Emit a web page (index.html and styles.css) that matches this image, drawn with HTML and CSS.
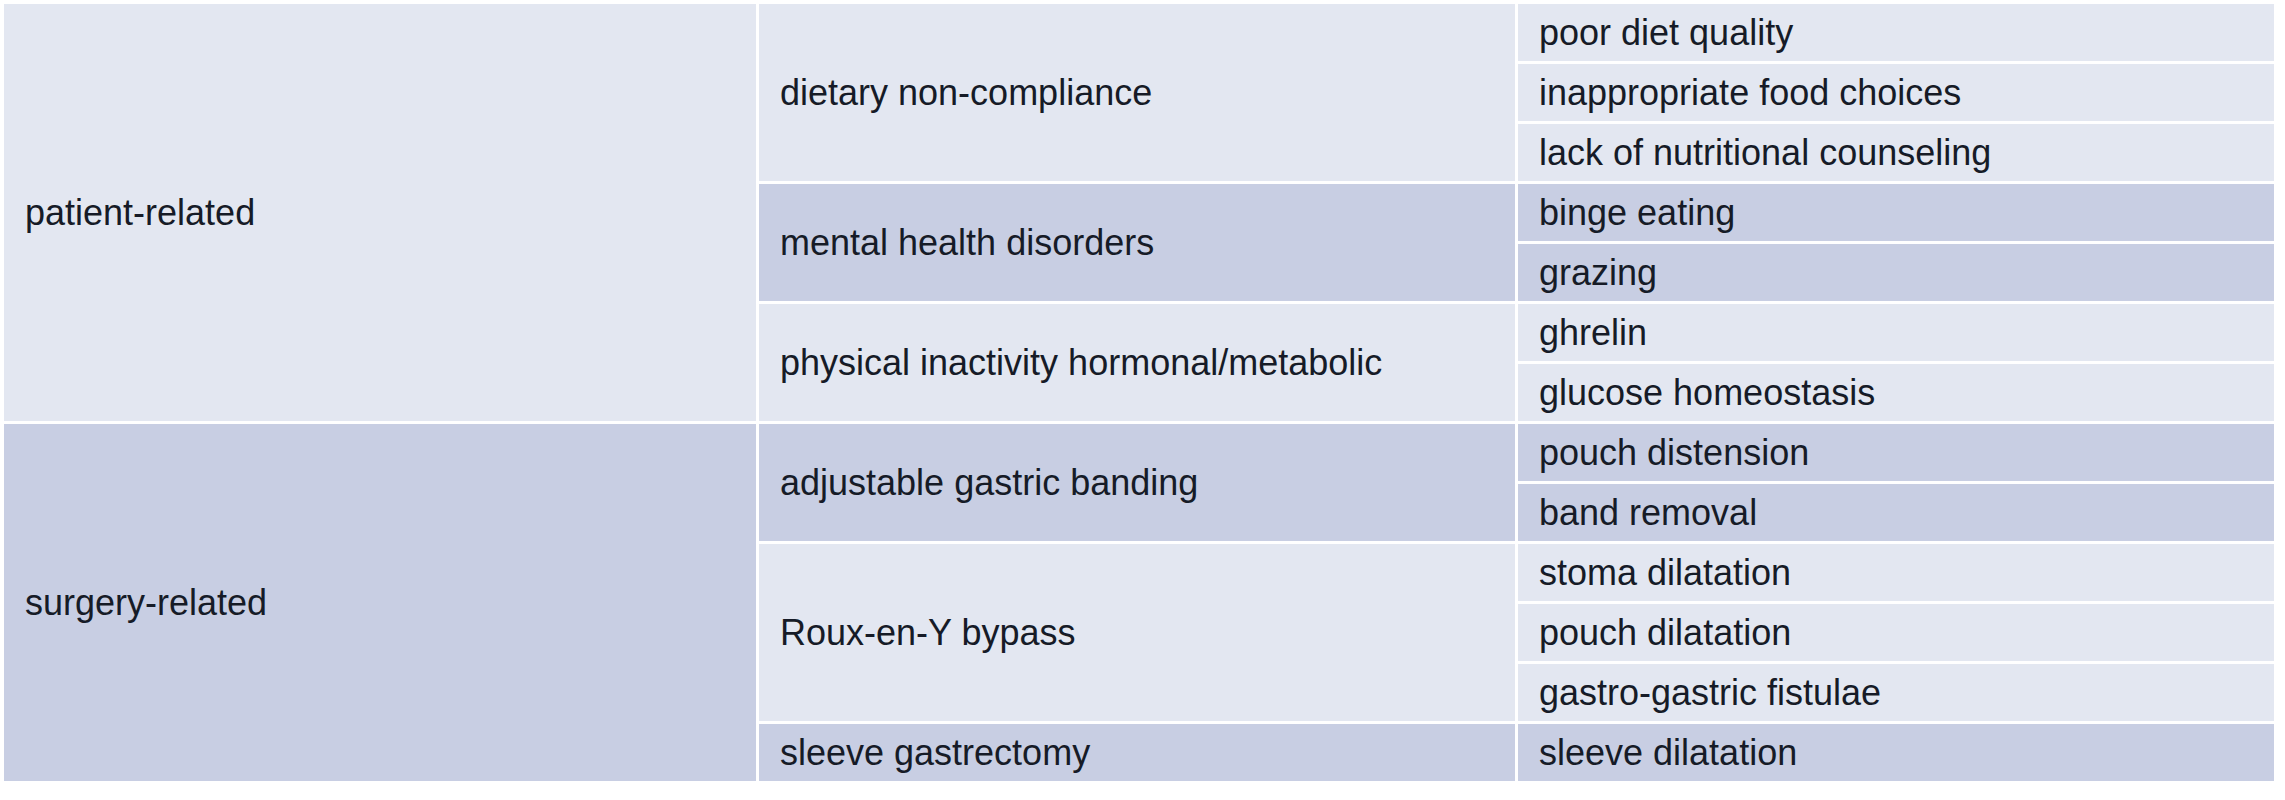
FILE: index.html
```html
<!DOCTYPE html>
<html lang="en">
<head>
<meta charset="utf-8">
<title>Causes of weight regain</title>
<link rel="stylesheet" href="styles.css">
</head>
<body>
<div class="table">
  <div class="cell c1 light span7">patient-related</div>
  <div class="cell c2 light span3">dietary non-compliance</div>
  <div class="cell c3 light">poor diet quality</div>
  <div class="cell c3 light">inappropriate food choices</div>
  <div class="cell c3 light">lack of nutritional counseling</div>
  <div class="cell c2 dark span2">mental health disorders</div>
  <div class="cell c3 dark">binge eating</div>
  <div class="cell c3 dark">grazing</div>
  <div class="cell c2 light span2">physical inactivity hormonal/metabolic</div>
  <div class="cell c3 light">ghrelin</div>
  <div class="cell c3 light">glucose homeostasis</div>

  <div class="cell c1 dark span6">surgery-related</div>
  <div class="cell c2 dark span2">adjustable gastric banding</div>
  <div class="cell c3 dark">pouch distension</div>
  <div class="cell c3 dark">band removal</div>
  <div class="cell c2 light span3">Roux-en-Y bypass</div>
  <div class="cell c3 light">stoma dilatation</div>
  <div class="cell c3 light">pouch dilatation</div>
  <div class="cell c3 light">gastro-gastric fistulae</div>
  <div class="cell c2 dark">sleeve gastrectomy</div>
  <div class="cell c3 dark">sleeve dilatation</div>
</div>
</body>
</html>
```

FILE: styles.css
```css
html, body {
  margin: 0;
  padding: 0;
  background: #ffffff;
}

body {
  padding: 4px 11px 0 4px;
  font-family: "Liberation Sans", Arial, sans-serif;
  color: #161b27;
}

.table {
  display: grid;
  grid-template-columns: 752px 756px 756px;
  grid-template-rows: repeat(13, 57px);
  grid-auto-flow: column;
  column-gap: 3px;
  row-gap: 3px;
}

.cell {
  display: flex;
  align-items: center;
  padding-left: 21px;
  font-size: 36px;
  white-space: nowrap;
}

.c1 { grid-column: 1; }
.c2 { grid-column: 2; }
.c3 { grid-column: 3; }

.span2 { grid-row: span 2; }
.span3 { grid-row: span 3; }
.span6 { grid-row: span 6; }
.span7 { grid-row: span 7; }

.light { background: #e3e7f1; }
.dark { background: #c8cee3; }
```
